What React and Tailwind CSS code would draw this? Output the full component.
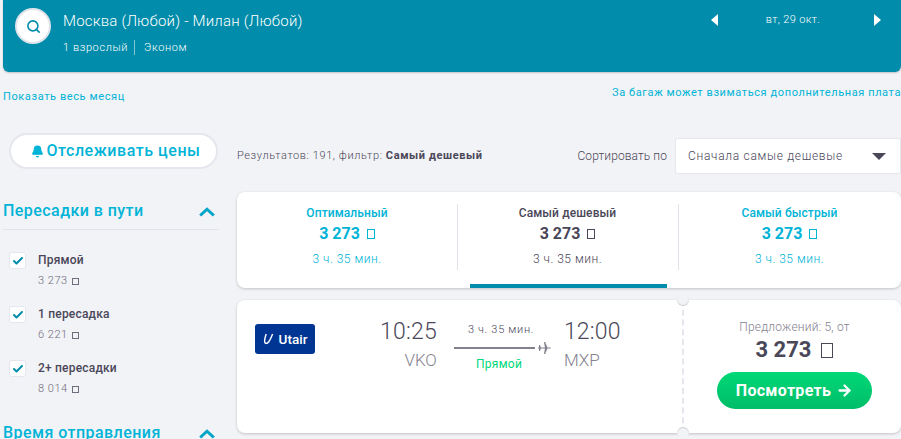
import { Check, Search, Bell, ArrowRight } from "lucide-react";

const stops = [
  { label: "Прямой", price: "3 273" },
  { label: "1 пересадка", price: "6 221" },
  { label: "2+ пересадки", price: "8 014" },
];

const tabs = [
  { title: "Оптимальный", color: "text-[#00b3d7]" },
  { title: "Самый дешевый", color: "text-[#4a4759]", active: true },
  { title: "Самый быстрый", color: "text-[#00b3d7]" },
];

// the ruble sign has no glyph in the original font, it shows as an empty box
function Tofu({ className }) {
  return <span className={`inline-block border border-current ${className}`} />;
}

function FilterHead({ title }) {
  return (
    <div className="flex items-center justify-between pr-1">
      <span className="text-[16px] font-medium leading-6 tracking-[0.45px] text-[#00b3d7]">{title}</span>
      <svg width="16" height="10" viewBox="0 0 16 10" className="mt-[2px]">
        <path d="M1.2 8.5 8 2.2l6.8 6.3" fill="none" stroke="#00a5c8" strokeWidth="3" />
      </svg>
    </div>
  );
}

export default function App() {
  return (
    <div className="h-[439px] w-[901px] overflow-hidden bg-[#f2f3f6] font-['Roboto',sans-serif] text-[#4a4759]">
      <header className="ml-[3px] flex h-[72px] rounded-b-[6px] bg-[#008caa] pl-3 pr-5 text-white shadow-[0_1px_2px_rgba(0,0,0,0.2)]">
        <div className="mt-2 flex h-9 w-9 items-center justify-center rounded-full border-2 border-[#dfe3ea] bg-white">
          <Search size={15} strokeWidth={2.6} className="text-[#008caa]" />
        </div>
        <div className="ml-3 pt-[11px]">
          <div className="text-[15px] font-light leading-5 tracking-[0.2px]">Москва (Любой) - Милан (Любой)</div>
          <div className="mt-[9px] flex items-center text-[11px] font-light leading-[15px] tracking-[0.6px]">
            <span className="border-r border-[#7fc5d4] pr-[6px]">1 взрослый</span>
            <span className="pl-[9px]">Эконом</span>
          </div>
        </div>
        <div className="ml-auto mt-[13px] flex h-[14px] w-[170px] items-center justify-between">
          <svg width="8" height="12" viewBox="0 0 8 12"><path d="M7 0v12L0 6z" fill="#fff" /></svg>
          <span className="mr-[6px] text-[11px] font-light tracking-[0.35px]">вт, 29 окт.</span>
          <svg width="8" height="12" viewBox="0 0 8 12"><path d="M1 0v12l7-6z" fill="#fff" /></svg>
        </div>
      </header>

      <div className="flex items-start justify-between pl-[3px] pt-[14px] text-[11px] leading-[14px] tracking-[0.6px] text-[#00b3d7]">
        <span className="mt-1">Показать весь месяц</span>
        <span>За багаж может взиматься дополнительная плата</span>
      </div>

      <div className="mt-[29px] flex">
        <aside className="ml-[3px] w-[216px]">
          <button className="ml-[6px] flex h-9 w-[209px] items-center justify-center rounded-full border-2 border-[#e6e7ee] bg-white pl-1 text-[16px] font-medium tracking-[0.55px] text-[#00b3d7]">
            <Bell size={13} fill="currentColor" className="mr-[3px]" />
            Отслеживать цены
          </button>
          <div className="mt-[30px] border-b border-[#e1e3ea] pb-[6px]">
            <FilterHead title="Пересадки в пути" />
          </div>
          <ul className="mt-[22px] flex flex-col gap-[18px] pl-[6px]">
            {stops.map((stop) => (
              <li key={stop.label} className="flex">
                <span className="flex h-[17px] w-[17px] items-center justify-center rounded-[3px] border border-[#e6e7ee] bg-white">
                  <Check size={12} strokeWidth={4} className="text-[#008caa]" />
                </span>
                <div className="ml-3">
                  <div className="text-[12px] font-medium leading-[17px] tracking-[0.2px] text-[#4a4759]">{stop.label}</div>
                  <div className="mt-[5px] flex items-center text-[11px] font-light leading-[14px] tracking-[0.5px] text-[#6f6c7c]">
                    {stop.price}
                    <Tofu className="ml-1 h-[7px] w-[7px]" />
                  </div>
                </div>
              </li>
            ))}
          </ul>
          <div className="mt-[25px]">
            <FilterHead title="Время отправления" />
          </div>
        </aside>

        <main className="ml-[18px] min-w-0 flex-1 pt-[5px]">
          <div className="flex h-[36px] items-center justify-between">
            <div className="text-[11px] tracking-[0.6px]">
              <span className="font-light">Результатов: 191, фильтр: </span>
              <span className="font-bold">Самый дешевый</span>
            </div>
            <div className="flex items-center">
              <span className="mr-2 text-[12px] font-light tracking-[0.1px]">Сортировать по</span>
              <div className="flex h-[36px] w-[226px] items-center justify-between rounded-[3px] border border-[#e6e7ee] bg-white pl-3 pr-[14px] text-[12px] font-light tracking-[0.7px]">
                Сначала самые дешевые
                <svg width="14" height="7" viewBox="0 0 14 7"><path d="M0 0h14L7 7z" fill="#4a4759" /></svg>
              </div>
            </div>
          </div>

          <section className="mt-[18px] grid h-[96px] grid-cols-[220px_221px_1fr] rounded-[8px] bg-white shadow-[0_1px_3px_rgba(0,0,0,0.2)]">
            {tabs.map((tab, i) => (
              <div key={tab.title} className={`relative flex flex-col items-center pt-[13px] ${tab.color}`}>
                <div className="text-[12px] font-medium leading-4 tracking-[0.1px]">{tab.title}</div>
                <div className="mt-[3px] flex items-center text-[16px] font-bold leading-5">
                  3 273
                  <Tofu className="ml-[7px] h-[10px] w-[8px]" />
                </div>
                <div className="mt-[7px] text-[12px] font-light leading-4 tracking-[0.5px]">3 ч. 35 мин.</div>
                {i > 0 && <span className="absolute left-0 top-3 h-[66px] w-px bg-[#e1e3ea]" />}
                {tab.active && <span className="absolute bottom-0 left-[13px] right-[11px] h-1 bg-[#008caa]" />}
              </div>
            ))}
          </section>

          <section className="mt-3 flex h-[133px] rounded-[8px] bg-white shadow-[0_1px_3px_rgba(0,0,0,0.2)]">
            <div className="flex flex-1 items-start pl-[18px] pt-[18px]">
              <div className="mt-[6px] flex h-[30px] w-[60px] items-center justify-center rounded-[3px] bg-[#003594] text-[13.5px] font-medium text-white">
                <svg width="11" height="12" viewBox="0 0 11 12" className="mr-[5px]">
                  <path d="M3.2 1C2.2 4 1.2 7 1.7 9c.5 2 2.5 1.8 3.9 0C7 7.2 8.4 4 9.6 1" fill="none" stroke="#fff" strokeWidth="1.4" />
                </svg>
                Utair
              </div>
              <div className="ml-[65px] flex flex-col items-end">
                <div className="text-[23px] font-light leading-7 tracking-[0.2px]">10:25</div>
                <div className="mt-1 text-[17px] font-light leading-5 text-[#84818f]">VKO</div>
              </div>
              <div className="ml-[17px] flex w-[98px] flex-col">
                <div className="ml-[14px] mt-[5px] text-[11px] font-light leading-[14px] tracking-[0.7px]">3 ч. 35 мин.</div>
                <div className="mt-[5px] flex w-full items-center">
                  <span className="h-[2px] w-[81px] bg-[#84818f]" />
                  <svg width="13" height="12" viewBox="0 0 13 12" className="ml-[3px]">
                    <path d="M0 5.4h12.2c.6 0 .8.4.8.6s-.2.6-.8.6H0zM1 3h1l1 3-1 3H1zM6 0h1.2L9.6 6l-2.4 6H6l1-6z" fill="#84818f" />
                  </svg>
                </div>
                <div className="ml-[22px] mt-[2px] text-[12px] leading-4 tracking-[0.3px] text-[#00d87a]">Прямой</div>
              </div>
              <div className="ml-[12px]">
                <div className="text-[23px] font-light leading-7 tracking-[0.2px]">12:00</div>
                <div className="mt-1 text-[17px] font-light leading-5 text-[#84818f]">MXP</div>
              </div>
            </div>
            <div className="relative flex w-[219px] flex-col items-center border-l-2 border-dashed border-[#e6e7ee] pl-1 pt-[17px]">
              <span className="absolute -left-[7px] -top-[6px] h-3 w-3 rounded-full bg-[#f2f3f6] shadow-[inset_0_-1px_1px_rgba(0,0,0,0.15)]" />
              <span className="absolute -bottom-[6px] -left-[7px] h-3 w-3 rounded-full bg-[#f2f3f6] shadow-[inset_0_1px_1px_rgba(0,0,0,0.15)]" />
              <div className="text-[12px] font-light leading-[20px] tracking-[0.2px] text-[#84818f]">Предложений: 5, от</div>
              <div className="mt-[1px] flex items-center text-[22px] font-bold leading-6">
                3 273
                <Tofu className="ml-[10px] h-[15px] w-[12px]" />
              </div>
              <button className="mt-[10px] flex h-[37px] w-[155px] items-center justify-center rounded-full bg-gradient-to-b from-[#00d877] to-[#00bd68] text-[16px] font-bold tracking-[0.3px] text-white">
                Посмотреть
                <ArrowRight size={17} strokeWidth={3.2} className="ml-[5px]" />
              </button>
            </div>
          </section>
        </main>
      </div>
    </div>
  );
}
